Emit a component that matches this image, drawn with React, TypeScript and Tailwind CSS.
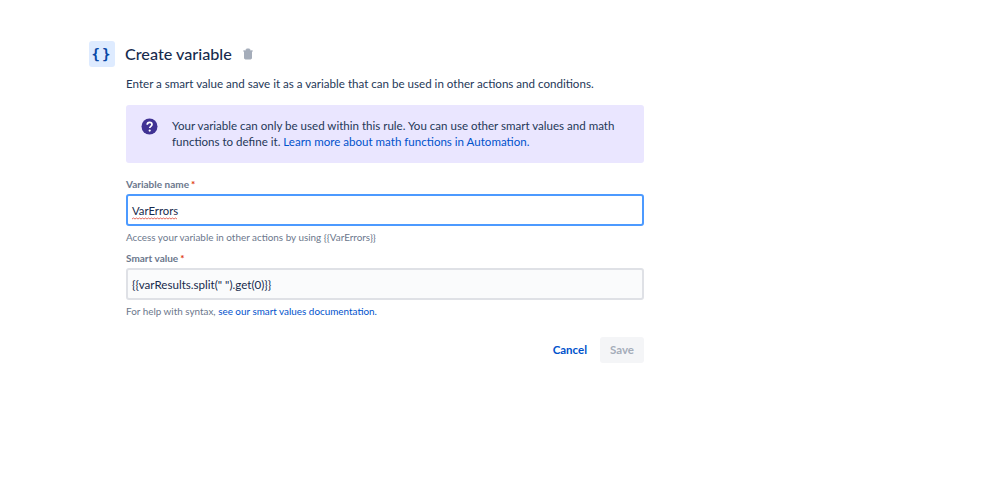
import { Trash2 } from 'lucide-react'

function Squiggle() {
  return (
    <svg className="absolute left-0 top-[14px]" width="45" height="3" viewBox="0 0 45 3">
      <path d="M0 2 L1.5 1 L3 2 L4.5 1 L6 2 L7.5 1 L9 2 L10.5 1 L12 2 L13.5 1 L15 2 L16.5 1 L18 2 L19.5 1 L21 2 L22.5 1 L24 2 L25.5 1 L27 2 L28.5 1 L30 2 L31.5 1 L33 2 L34.5 1 L36 2 L37.5 1 L39 2 L40.5 1 L42 2 L43.5 1 L45 2" fill="none" stroke="#e0473a" strokeWidth="0.8" />
    </svg>
  )
}

export default function App() {
  return (
    <div className="h-[500px] w-[998px] bg-white pl-[89px] pt-[41px] font-['Lato',sans-serif] text-[#172b4d]">
      <div className="flex items-center">
        <div className="flex h-[26px] w-[26px] items-center justify-center rounded-[3px] bg-[#deebff] font-['DejaVu_Sans_Mono',monospace] text-[14px] font-bold tracking-[2px] text-[#0747a6]">
          {'{}'}
        </div>
        <h1 className="ml-[10px] text-[16.2px] leading-[26px] font-medium text-[#172b4d]">Create variable</h1>
        <Trash2 size={12} className="ml-[10px] text-[#a5adba]" fill="#a5adba" />
      </div>

      <div className="ml-[37px] w-[518px]">
        <p className="mt-[9px] text-[11.58px] leading-[16px] whitespace-nowrap text-[#253858]">
          Enter a smart value and save it as a variable that can be used in other actions and conditions.
        </p>

        <div className="mt-[13px] flex h-[58px] rounded-[3px] bg-[#eae6ff] pl-[15px] pt-[13px]">
          <svg width="18" height="18" viewBox="0 0 18 18" className="shrink-0">
            <circle cx="8.5" cy="8.5" r="8" fill="#403294" />
            <path d="M6.2 6.8 C6.2 5.2 7.3 4.4 8.6 4.4 C10 4.4 11 5.3 11 6.6 C11 8.4 8.7 8.4 8.7 10.1" fill="none" stroke="#fff" strokeWidth="1.7" />
            <circle cx="8.7" cy="12.6" r="1.1" fill="#fff" />
          </svg>
          <p className="ml-[13px] text-[11.55px] leading-[16px] whitespace-nowrap text-[#253858]">
            Your variable can only be used within this rule. You can use other smart values and math
            <br />
            functions to define it. <span className="text-[#0052cc]">Learn more about math functions in Automation.</span>
          </p>
        </div>

        <label className="mt-[14px] block text-[10px] leading-[14px] font-bold text-[#6b778c]">
          Variable name<span className="ml-[2px] text-[#de350b]">*</span>
        </label>
        <div className="mt-[3px] flex h-[32px] items-center rounded-[3px] border-2 border-[#4c9aff] bg-white pl-[4px] pt-[2px] text-[11.3px] text-[#172b4d]">
          <span className="relative">
            VarErrors
            <Squiggle />
          </span>
        </div>
        <p className="mt-[4px] text-[9.9px] leading-[14px] text-[#6b778c]">
          {'Access your variable in other actions by using {{VarErrors}}'}
        </p>

        <label className="mt-[7px] block text-[10px] leading-[14px] font-bold text-[#6b778c]">
          Smart value<span className="ml-[2px] text-[#de350b]">*</span>
        </label>
        <div className="mt-[3px] flex h-[32px] items-center rounded-[3px] border-2 border-[#dfe1e6] bg-[#fafbfc] pl-[4px] pt-[2px] text-[11.6px] text-[#172b4d]">
          {'{{varResults.split(" ").get(0)}}'}
        </div>
        <p className="mt-[4px] text-[9.9px] leading-[14px] text-[#6b778c]">
          For help with syntax, <span className="text-[#0052cc]">see our smart values documentation.</span>
        </p>

        <div className="mt-[19px] flex items-center justify-end">
          <span className="text-[11.5px] font-bold text-[#0052cc]">Cancel</span>
          <span className="ml-[13px] flex h-[26px] w-[44px] items-center justify-center rounded-[3px] bg-[#f4f5f7] text-[11.5px] font-bold text-[#a5adba]">
            Save
          </span>
        </div>
      </div>
    </div>
  )
}
